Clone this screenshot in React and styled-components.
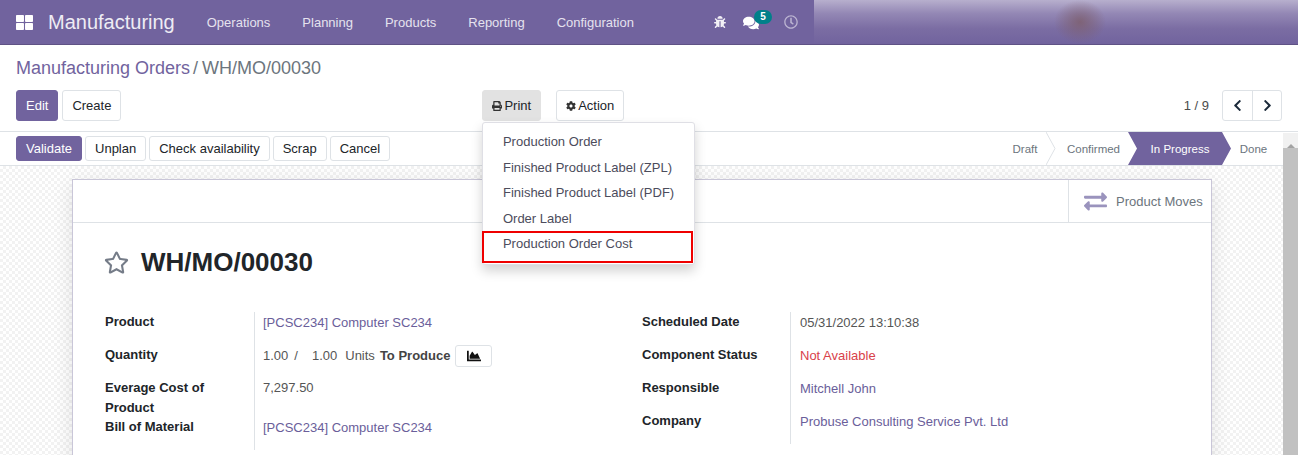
import React from "react";
import styled, { createGlobalStyle } from "styled-components";
import { FaBug, FaChartArea, FaChevronLeft, FaChevronRight, FaCog, FaComments, FaExchangeAlt, FaPrint, FaRegClock, FaRegStar, FaThLarge } from "react-icons/fa";

const GlobalStyle = createGlobalStyle`
  html, body { margin: 0; padding: 0; height: 100%; overflow: hidden; }
  body { font-family: "Liberation Sans", Arial, sans-serif; font-size: 13px; color: #212529; background: #fff; }
  * { box-sizing: border-box; }
`;

const Page = styled.div`
  width: 1298px;
  height: 455px;
  display: flex;
  flex-direction: column;
  overflow: hidden;
`;

const NavBar = styled.header`
  position: relative;
  flex: none;
  height: 45px;
  display: flex;
  align-items: center;
  padding-left: 16px;
  background: #71639e;
  border-bottom: 1px solid #5f5285;
  color: #fff;
`;

const Brand = styled.div`
  margin-left: 15px;
  margin-right: 16px;
  font-size: 20px;
  color: #eeecf4;
`;

const NavItem = styled.span`
  padding: 0 16px;
  font-size: 13px;
  color: #e5e2ee;
  white-space: nowrap;
`;

const SystemTray = styled.div`
  position: absolute;
  left: 714px;
  top: 0;
  height: 44px;
  display: flex;
  align-items: center;
  gap: 17px;
`;

const ChatIcon = styled.span`
  position: relative;
  display: flex;
  margin-top: 1px;
`;

const Badge = styled.span`
  position: absolute;
  left: 11px;
  top: -5px;
  width: 18px;
  height: 14px;
  border-radius: 7px;
  background: #00808a;
  color: #fff;
  font-size: 10px;
  font-weight: 700;
  line-height: 14px;
  text-align: center;
`;

const ClockIcon = styled.span`
  display: flex;
  margin-left: 8px;
  color: #bcb5d2;
`;

const BlurredBanner = styled.div`
  position: absolute;
  left: 814px;
  right: 0;
  top: 0;
  height: 44px;
  background:
    radial-gradient(ellipse 26px 22px at 266px 22px, rgba(125, 95, 110, 0.85), rgba(125, 95, 110, 0) 100%),
    linear-gradient(180deg, #b7afcd 0%, #9488b5 30%, #7b6da3 65%, #71639e 100%);
`;

const ControlPanel = styled.section`
  flex: none;
  height: 87px;
  padding: 13px 16px 0;
  border-bottom: 1px solid #dee2e6;
`;

const Breadcrumb = styled.div`
  height: 20px;
  margin-bottom: 12px;
  font-size: 18px;
  line-height: 20px;
  color: #71639e;

  span {
    color: #6c757d;
    margin-left: 3px;
    word-spacing: -1px;
  }
`;

const ButtonRow = styled.div`
  display: flex;
  align-items: flex-start;
`;

const Button = styled.button`
  height: ${(p) => p.$height || 31}px;
  padding: 0 ${(p) => p.$pad || 9}px;
  display: inline-flex;
  align-items: center;
  gap: 2px;
  margin-right: ${(p) => p.$gap ?? 4}px;
  font-family: inherit;
  font-size: 13px;
  border-radius: 3px;
  border: 1px solid ${(p) => (p.$primary ? "#71639e" : p.$active ? "#e2e2e2" : "#dee2e6")};
  background: ${(p) => (p.$primary ? "#71639e" : p.$active ? "#e2e2e2" : "#fff")};
  color: ${(p) => (p.$primary ? "#fff" : "#212529")};
`;

const PrintMenuAnchor = styled.div`
  position: relative;
  margin-left: 361px;
  margin-right: 15px;
`;

const Dropdown = styled.div`
  position: absolute;
  z-index: 5;
  left: 0;
  top: 32px;
  width: 213px;
  height: 143px;
  padding: 6.35px 0 0;
  background: #fff;
  border: 1px solid #dfdfe5;
  border-radius: 3px;
  box-shadow: 0 6px 12px rgba(0, 0, 0, 0.176);
`;

const DropdownItem = styled.div`
  height: 25.4px;
  padding-left: 19.5px;
  line-height: 25px;
  font-size: 13px;
  color: #4c4c5c;
  white-space: nowrap;
`;

const Highlight = styled.div`
  position: absolute;
  left: -1px;
  top: 108px;
  width: 211px;
  height: 32px;
  border: 2px solid #ef0000;
`;

const Pager = styled.div`
  margin-left: auto;
  display: flex;
  align-items: center;
  height: 31px;
  gap: 13px;
  font-size: 13px;
  color: #4c4c4c;
`;

const PagerGroup = styled.div`
  display: flex;
  height: 31px;
  border: 1px solid #dee2e6;
  border-radius: 3px;
`;

const PagerButton = styled.span`
  width: ${(p) => p.$w}px;
  display: flex;
  align-items: center;
  justify-content: center;
  color: #1b2a3a;

  & + & {
    border-left: 1px solid #dee2e6;
  }
`;

const Body = styled.div`
  flex: 1;
  min-height: 0;
  display: flex;
`;

const Main = styled.main`
  flex: 1;
  min-width: 0;
  display: flex;
  flex-direction: column;
`;

const StatusBar = styled.div`
  flex: none;
  height: 34px;
  display: flex;
  align-items: center;
  justify-content: space-between;
  padding-left: 16px;
  border-bottom: 1px solid #dee2e6;
`;

const Actions = styled.div`
  display: flex;
`;

const Steps = styled.div`
  display: flex;
  height: 33px;
  align-items: stretch;
  margin-right: 1px;
`;

const Step = styled.div`
  width: ${(p) => p.$w}px;
  padding: 0 ${(p) => p.$pr || 0}px 0 ${(p) => p.$pl || 0}px;
  display: flex;
  align-items: center;
  justify-content: center;
  font-size: 11.5px;
  color: ${(p) => (p.$current ? "#fff" : "#6c757d")};
  background: ${(p) => (p.$current ? "#71639e" : "transparent")};
  clip-path: ${(p) => (p.$current ? "polygon(0 0, calc(100% - 9px) 0, 100% 50%, calc(100% - 9px) 100%, 0 100%, 9px 50%)" : "none")};
`;

const Chevron = styled.svg`
  flex: none;
  width: 10px;
  height: 33px;
`;

const Scrollbar = styled.div`
  flex: none;
  width: 15px;
  margin-top: 1px;
  background: #f1f1f1;
  display: flex;
  flex-direction: column;
`;

const ScrollArrow = styled.div`
  height: 15px;
  display: flex;
  justify-content: center;
  padding-top: 5px;

  &::before {
    content: "";
    border: 4px solid transparent;
    border-top: 0;
    border-bottom: 4px solid #a3a3a3;
  }
`;

const ScrollThumb = styled.div`
  flex: 1;
  background: #c1c1c1;
`;

const Content = styled.div`
  flex: 1;
  min-height: 0;
  padding: 13px 72px 0;
  overflow: hidden;
  background-color: #fff;
  background-image: conic-gradient(#f2f2f2 25%, #fff 0 50%, #f2f2f2 0 75%, #fff 0);
  background-size: 6px 6px;
`;

const Sheet = styled.div`
  width: 1140px;
  height: 400px;
  margin-right: -1px;
  background: #fff;
  border: 1px solid #c9c6d8;
  box-shadow: 0 5px 20px -1px rgba(0, 0, 0, 0.12);
`;

const ButtonBox = styled.div`
  height: 43px;
  display: flex;
  justify-content: flex-end;
  border-bottom: 1px solid #dee2e6;
`;

const StatButton = styled.div`
  width: 143px;
  display: flex;
  align-items: center;
  gap: 9px;
  padding-left: 15px;
  border-left: 1px solid #dee2e6;
  color: #6c757d;
  font-size: 13px;
  white-space: nowrap;

  svg {
    color: #9a93bd;
    font-size: 23px;
  }
`;

const SheetBody = styled.div`
  padding: 21px 32px 0;
`;

const Title = styled.div`
  display: flex;
  align-items: center;
  gap: 12px;
  height: 36px;
  margin-bottom: 32px;
  margin-left: -1px;
  font-size: 26px;
  font-weight: 700;
  color: #212529;

  svg {
    color: #757c88;
    font-size: 25px;
  }
`;

const FormColumns = styled.div`
  display: grid;
  grid-template-columns: 537px 1fr;
`;

const FieldGrid = styled.div`
  display: grid;
  grid-template-columns: ${(p) => p.$label}px 1fr;
  align-content: start;
`;

const Label = styled.div`
  height: ${(p) => p.$h || 33}px;
  padding-right: 8px;
  font-weight: 700;
  font-size: 13px;
  line-height: 20px;
  color: #212529;
`;

const Value = styled.div`
  min-height: ${(p) => p.$h || 33}px;
  padding: ${(p) => p.$top ?? 1}px 0 0 ${(p) => p.$pl || 8}px;
  border-left: 1px solid #dee2e6;
  line-height: 20px;
  font-size: 13px;
  color: ${(p) => (p.$danger ? "#d9414a" : p.$link ? "#6a5e9a" : "#555")};
  display: flex;
  align-items: flex-start;
  white-space: nowrap;
`;

const Quantity = styled.span`
  margin-right: ${(p) => p.$gap}px;
`;

const ToProduce = styled.b`
  font-weight: 700;
  margin-left: 5px;
  color: #444;
`;

const ChartButton = styled.span`
  width: 37px;
  height: 22px;
  margin-left: 5px;
  margin-top: -1px;
  display: flex;
  align-items: center;
  justify-content: center;
  border: 1px solid #dee2e6;
  border-radius: 3px;
  color: #111;
  font-size: 14px;
`;

const NAV = ["Operations", "Planning", "Products", "Reporting", "Configuration"];
const PRINTS = ["Production Order", "Finished Product Label (ZPL)", "Finished Product Label (PDF)", "Order Label", "Production Order Cost"];

export default function App() {
  return (
    <Page>
      <GlobalStyle />
      <NavBar>
        <FaThLarge size={17} />
        <Brand>Manufacturing</Brand>
        {NAV.map((n) => (
          <NavItem key={n}>{n}</NavItem>
        ))}
        <SystemTray>
          <FaBug size={12} color="#f2f0f6" />
          <ChatIcon>
            <FaComments size={16} color="#fff" />
            <Badge>5</Badge>
          </ChatIcon>
          <ClockIcon>
            <FaRegClock size={14} />
          </ClockIcon>
        </SystemTray>
        <BlurredBanner />
      </NavBar>

      <ControlPanel>
        <Breadcrumb>
          Manufacturing Orders<span>/ WH/MO/00030</span>
        </Breadcrumb>
        <ButtonRow>
          <Button $primary>Edit</Button>
          <Button $gap={0}>Create</Button>
          <PrintMenuAnchor>
            <Button $active $gap={0}>
              <FaPrint size={10} color="#333" /> Print
            </Button>
            <Dropdown>
              {PRINTS.map((p) => (
                <DropdownItem key={p}>{p}</DropdownItem>
              ))}
              <Highlight />
            </Dropdown>
          </PrintMenuAnchor>
          <Button $gap={0}>
            <FaCog size={10} color="#333" /> Action
          </Button>
          <Pager>
            <span>1 / 9</span>
            <PagerGroup>
              <PagerButton $w={29}>
                <FaChevronLeft size={13} />
              </PagerButton>
              <PagerButton $w={29}>
                <FaChevronRight size={13} />
              </PagerButton>
            </PagerGroup>
          </Pager>
        </ButtonRow>
      </ControlPanel>

      <Body>
        <Main>
          <StatusBar>
            <Actions>
              <Button $primary $height={25} $gap={3}>Validate</Button>
              <Button $height={25} $gap={3}>Unplan</Button>
              <Button $height={25} $gap={3}>Check availability</Button>
              <Button $height={25} $gap={3}>Scrap</Button>
              <Button $height={25} $gap={0}>Cancel</Button>
            </Actions>
            <Steps>
              <Step $w={42}>Draft</Step>
              <Chevron viewBox="0 0 10 33">
                <path d="M0 0 L9 16.5 L0 33" fill="none" stroke="#dee2e6" />
              </Chevron>
              <Step $w={72} $pl={3}>Confirmed</Step>
              <Step $w={103} $current $pl={1}>In Progress</Step>
              <Step $w={51} $pr={6}>Done</Step>
            </Steps>
          </StatusBar>
          <Content>
            <Sheet>
              <ButtonBox>
                <StatButton>
                  <FaExchangeAlt />
                  Product Moves
                </StatButton>
              </ButtonBox>
              <SheetBody>
                <Title>
                  <FaRegStar />
                  WH/MO/00030
                </Title>
                <FormColumns>
                  <FieldGrid $label={149}>
                    <Label>Product</Label>
                    <Value $link>[PCSC234] Computer SC234</Value>
                    <Label>Quantity</Label>
                    <Value>
                      <Quantity $gap={6}>1.00</Quantity>
                      <Quantity $gap={14}>/</Quantity>
                      <Quantity $gap={8}>1.00</Quantity>
                      Units
                      <ToProduce>To Produce</ToProduce>
                      <ChartButton>
                        <FaChartArea />
                      </ChartButton>
                    </Value>
                    <Label $h={39}>Everage Cost of Product</Label>
                    <Value $h={39} $top={0}>7,297.50</Value>
                    <Label>Bill of Material</Label>
                    <Value $link $top={1}>[PCSC234] Computer SC234</Value>
                  </FieldGrid>
                  <FieldGrid $label={148}>
                    <Label>Scheduled Date</Label>
                    <Value $pl={9}>05/31/2022 13:10:38</Value>
                    <Label>Component Status</Label>
                    <Value $danger $pl={9}>Not Available</Value>
                    <Label>Responsible</Label>
                    <Value $link $pl={9}>Mitchell John</Value>
                    <Label>Company</Label>
                    <Value $link $pl={9}>Probuse Consulting Service Pvt. Ltd</Value>
                  </FieldGrid>
                </FormColumns>
              </SheetBody>
            </Sheet>
          </Content>
        </Main>
        <Scrollbar>
          <ScrollArrow />
          <ScrollThumb />
        </Scrollbar>
      </Body>
    </Page>
  );
}
